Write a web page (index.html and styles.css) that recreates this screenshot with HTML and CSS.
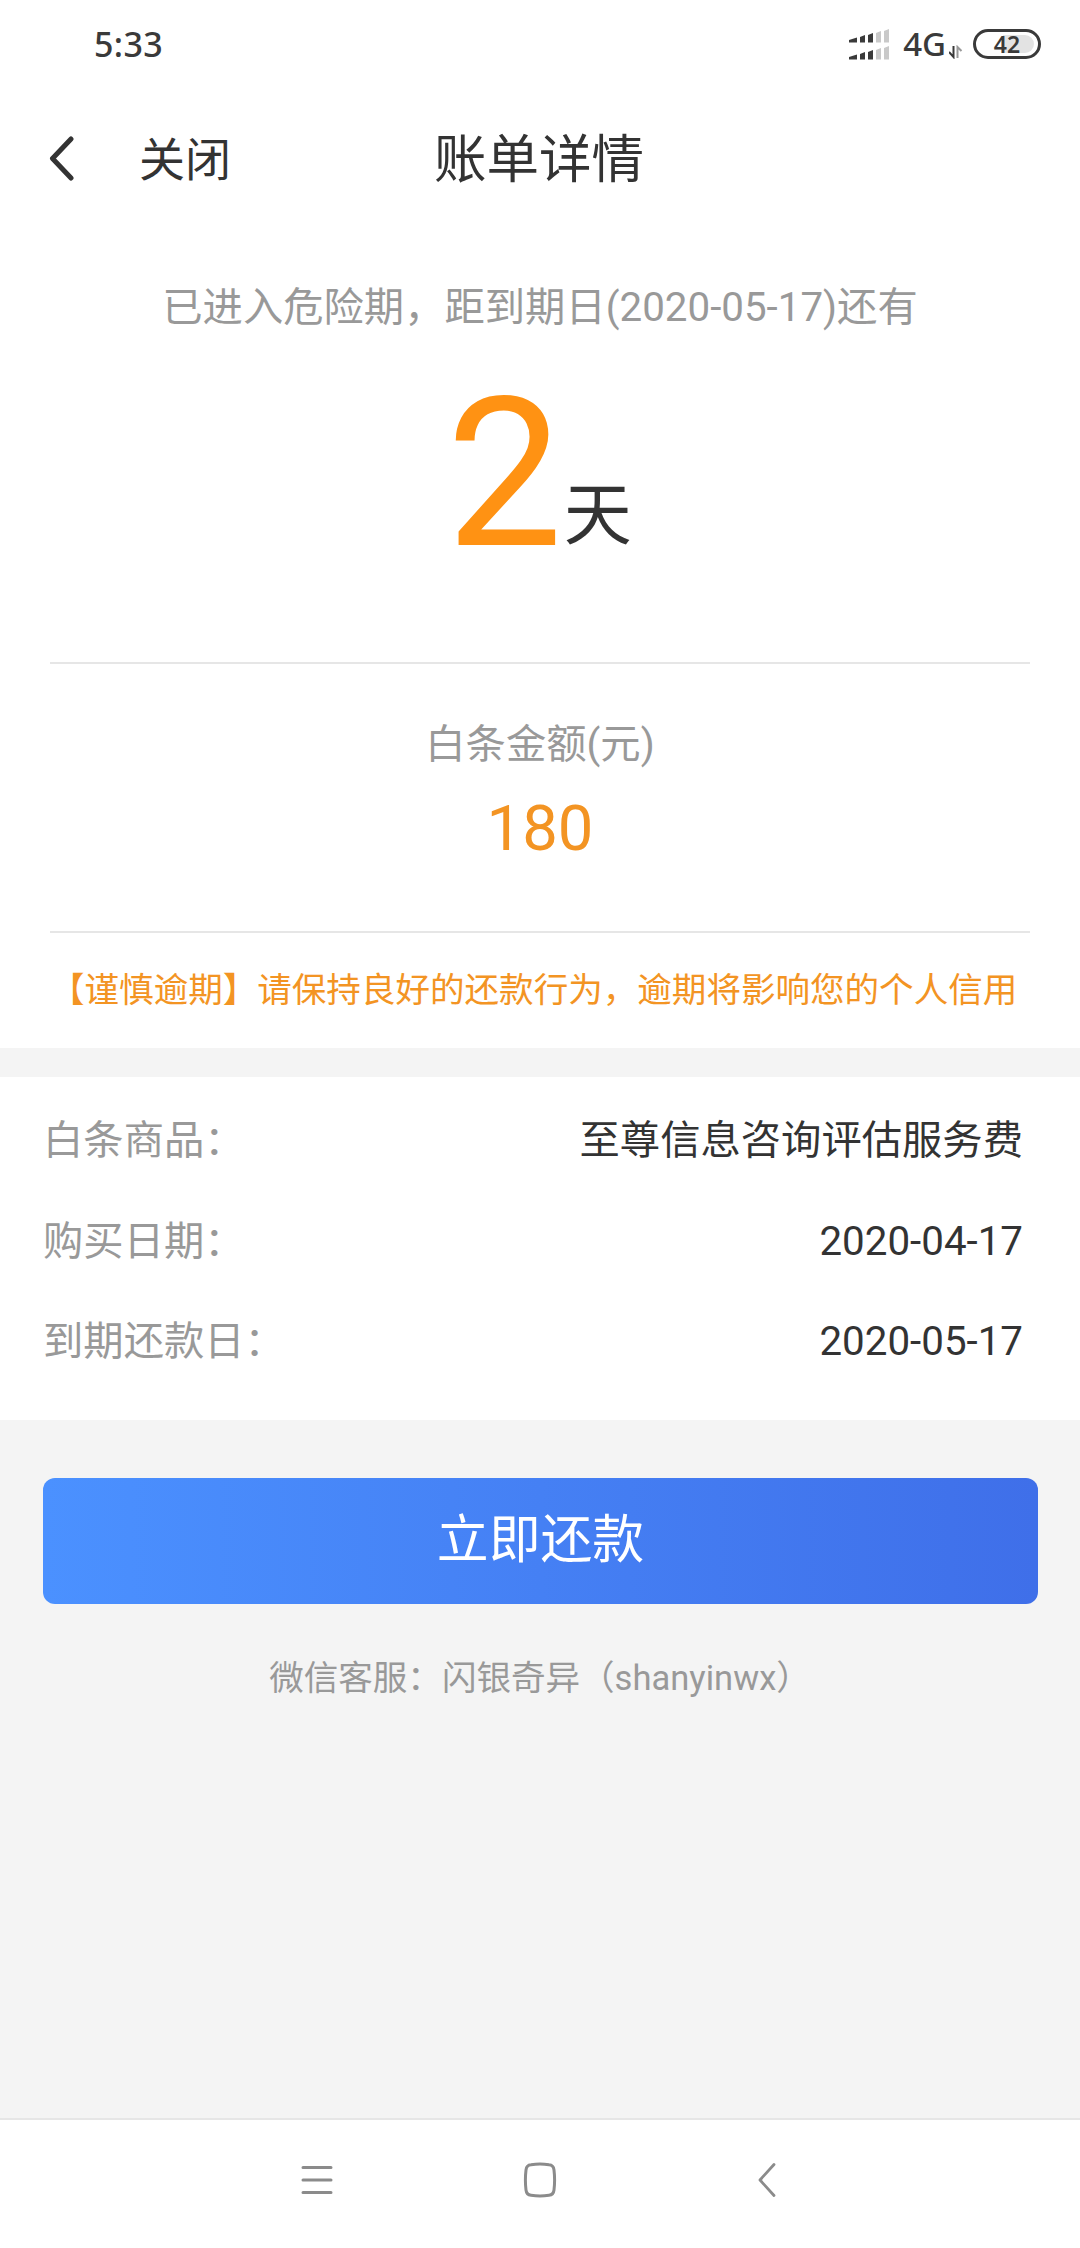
FILE: index.html
```html
<!DOCTYPE html>
<html lang="zh-CN">
<head>
<meta charset="utf-8">
<title>账单详情</title>
<link rel="stylesheet" href="styles.css">
</head>
<body>
<div class="status">
  <span class="clock">5:33</span>
  <div class="indicators">
    <svg class="signal" width="42" height="32" viewBox="0 0 42 32">
      <g fill="#3a3a3a">
        <path d="M0 11 8 8.500V13.500H0z"/><path d="M11 8 16 6V13.500H11z"/><path d="M19 6 24 4V13.500H19z"/>
        <path d="M0 28 8 25.500V30.500H0z"/><path d="M11 25 16 23V30.500H11z"/><path d="M19 23 24 21V30.500H19z"/>
      </g>
      <g fill="#c9c9c9">
        <path d="M27 4 32 2V13.500H27z"/><path d="M35 2 40 0V13.500H35z"/>
        <path d="M27 21 32 19V30.500H27z"/><path d="M35 19 40 17V30.500H35z"/>
      </g>
    </svg>
    <span class="network">4G</span>
    <svg class="arrows" width="14" height="14" viewBox="0 0 14 14">
      <path d="M0 7 4.500 12V1" fill="none" stroke="#3a3a3a" stroke-width="2"/>
      <path d="M8.500 13V2L12.500 6" fill="none" stroke="#999" stroke-width="2"/>
    </svg>
    <div class="battery"><span class="battery-level">42</span></div>
  </div>
</div>
<header class="header">
  <svg class="back" width="26" height="46" viewBox="0 0 26 46"><path d="M22 3 3.500 22.500 22 42" fill="none" stroke="#333" stroke-width="5" stroke-linecap="round" stroke-linejoin="round"/></svg>
  <span class="close">关闭</span>
  <h1 class="title">账单详情</h1>
</header>
<main class="page">
  <section class="summary">
    <p class="hint">已进入危险期，距到期日(2020-05-17)还有</p>
    <div class="days"><span class="days-number">2</span><span class="days-unit">天</span></div>
    <div class="amount">
      <p class="amount-label">白条金额(元)</p>
      <p class="amount-value">180</p>
    </div>
    <p class="warning">【谨慎逾期】请保持良好的还款行为，逾期将影响您的个人信用</p>
  </section>
  <section class="details">
    <div class="row"><span class="label">白条商品：</span><span>至尊信息咨询评估服务费</span></div>
    <div class="row"><span class="label">购买日期：</span><span>2020-04-17</span></div>
    <div class="row"><span class="label">到期还款日：</span><span>2020-05-17</span></div>
  </section>
  <button class="pay">立即还款</button>
  <p class="support">微信客服：闪银奇异（shanyinwx）</p>
</main>
<nav class="navbar">
  <svg width="34" height="36" viewBox="0 0 34 36"><path d="M3 5.500H31M3 18H31M3 30.500H31" stroke="#8b8b8b" stroke-width="3" stroke-linecap="round"/></svg>
  <svg width="34" height="36" viewBox="0 0 34 36"><path d="M8 2.800Q17 1.400 26 2.800Q30.500 3.200 31 8Q32.200 18 31 28Q30.500 32.800 26 33.200Q17 34.600 8 33.200Q3.500 32.800 3 28Q1.800 18 3 8Q3.500 3.200 8 2.800Z" fill="none" stroke="#8b8b8b" stroke-width="3"/></svg>
  <svg width="34" height="36" viewBox="0 0 34 36"><path d="M28 2.500 14 18 28 33.500" fill="none" stroke="#8b8b8b" stroke-width="2.800" stroke-linecap="round" stroke-linejoin="round"/></svg>
</nav>
</body>
</html>
```
FILE: styles.css
```css
* { box-sizing: border-box; }

body {
  margin: 0;
  width: 1080px;
  height: 2248px;
  display: flex;
  flex-direction: column;
  background: #fff;
  color: #333;
  font-family: Roboto, "Noto Sans CJK SC", sans-serif;
  font-size: 40.32px;
}

p, h1 { margin: 0; font-weight: 400; }
svg { display: block; flex: none; }

.status {
  height: 90px;
  flex: none;
  display: flex;
  justify-content: space-between;
  padding: 0 39px 0 94px;
  font-family: "Noto Sans", sans-serif;
  font-weight: 500;
  color: #3a3a3a;
}
.clock { font-size: 34px; line-height: 89px; letter-spacing: 0.4px; }
.indicators { display: flex; align-items: flex-start; }
.signal { margin-top: 29px; }
.network { margin-left: 12px; font-size: 33px; line-height: 88px; }
.arrows { margin: 45px 0 0 3px; }
.battery {
  width: 68px;
  height: 30px;
  margin: 29px 0 0 10px;
  padding: 3px 4px;
  border: 3px solid #3a3a3a;
  border-radius: 15px;
}
.battery-level {
  display: block;
  height: 18px;
  border-radius: 9px;
  background: linear-gradient(90deg, #fff 42%, #e3e3e3 42%);
  font-size: 23px;
  font-weight: 600;
  line-height: 18px;
  text-align: center;
}

.header {
  height: 137px;
  flex: none;
  display: grid;
  grid-template-columns: 90px 240px 320px 1fr;
  align-items: center;
  padding: 0 0 0 49px;
}
.close, .title { padding-top: 3px; line-height: 134px; }
.close { font-size: 46px; }
.title { font-size: 52.500px; text-align: center; }

.page { flex: 1; background: #f4f4f4; }

.summary { height: 821px; padding: 1px 50px 0; background: #fff; }
.hint { height: 160px; line-height: 160px; text-align: center; color: #999; }
.days {
  height: 276px;
  display: flex;
  justify-content: center;
  border-bottom: 2px solid #e6e6e6;
}
.days-number { margin-left: -2px; font-size: 207.360px; line-height: 173px; color: #ff9213; }
.days-unit { padding: 83px 0 0 1px; font-size: 68px; line-height: 90px; }
.amount { height: 269px; padding-top: 52px; text-align: center; border-bottom: 2px solid #e6e6e6; }
.amount-label { line-height: 58px; color: #999; }
.amount-value { font-size: 63.360px; line-height: 108px; color: #f39423; }
.warning { font-size: 34.560px; line-height: 114px; white-space: nowrap; color: #f39423; }

.details { height: 343px; margin-top: 29px; padding: 14px 57px 0 43px; background: #fff; }
.row { height: 100.500px; display: flex; justify-content: space-between; line-height: 100.500px; }
.label { color: #999; }

.pay {
  display: block;
  width: 995px;
  height: 126px;
  margin: 58px 0 0 43px;
  padding: 0;
  border: 0;
  border-radius: 12px;
  background: linear-gradient(90deg, #4b91ff, #3f6fe9);
  color: #fff;
  font-family: inherit;
  font-size: 51.840px;
  line-height: 122px;
}
.support { margin-top: 44px; font-size: 34.560px; line-height: 60px; text-align: center; color: #999; }

.navbar {
  height: 130px;
  flex: none;
  display: flex;
  justify-content: center;
  gap: 189px;
  padding-top: 42px;
  border-top: 2px solid #e6e6e6;
}
```
